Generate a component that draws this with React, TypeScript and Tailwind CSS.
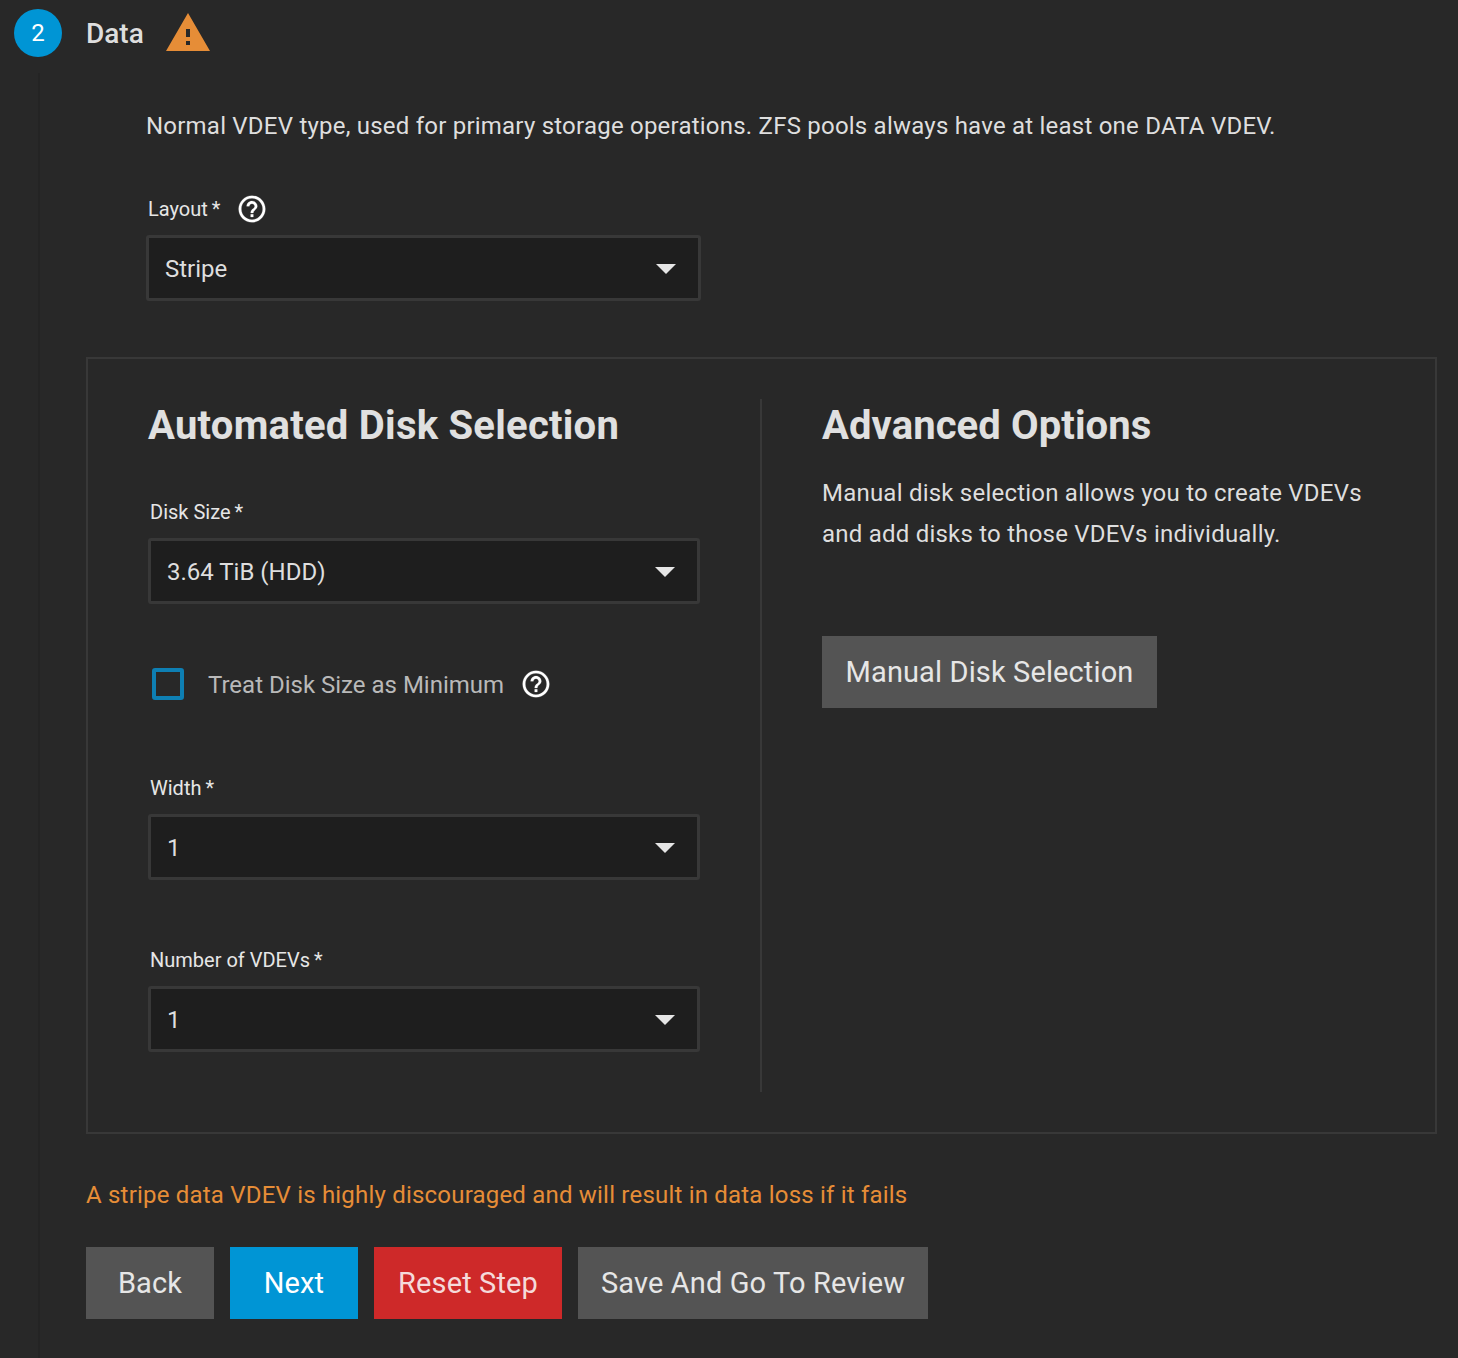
const QUESTION_PATH =
  "M11 18h2v-2h-2v2zm1-16C6.48 2 2 6.48 2 12s4.48 10 10 10 10-4.48 10-10S17.52 2 12 2zm0 18c-4.41 0-8-3.59-8-8s3.59-8 8-8 8 3.59 8 8-3.59 8-8 8zm0-14c-2.21 0-4 1.79-4 4h2c0-1.1.9-2 2-2s2 .9 2 2c0 2-3 1.75-3 5h2c0-2.25 3-2.5 3-5 0-2.21-1.79-4-4-4z";

const HelpIcon = () => (
  <svg viewBox="0 0 24 24" className="h-8 w-8 fill-white stroke-white stroke-[0.15]">
    <path d={QUESTION_PATH} />
  </svg>
);

const WarningIcon = () => (
  <svg viewBox="0 0 24 24" className="h-12 w-12 fill-[#e68d37]">
    <path d="M1 21h22L12 2 1 21zm12-3h-2v-2h2v2zm0-4h-2v-4h2v4z" />
  </svg>
);

const SelectField = ({
  label,
  value,
  help,
  wide,
}: {
  label: string;
  value: string;
  help?: boolean;
  wide?: boolean;
}) => (
  <div className={wide ? "w-[555px]" : "w-[552px]"}>
    <div className="flex h-8 items-center pl-[2px] text-[20px] leading-8 text-[#e6e6e6]">
      <span>{label}</span>
      <span className="ml-1">*</span>
      {help && (
        <span className="ml-[16px]">
          <HelpIcon />
        </span>
      )}
    </div>
    <div className="mt-[10px] flex h-[66px] items-center justify-between rounded-[3px] border-[3px] border-[#383838] bg-[#1e1e1e] pl-[16px] pr-[22px] pt-[2px] text-[24px] text-[#dedede]">
      <span>{value}</span>
      <span className="h-0 w-0 border-x-[10px] border-t-[10px] border-x-transparent border-t-[#e6e6e6]" />
    </div>
  </div>
);

const ActionButton = ({ children, className }: { children: string; className: string }) => (
  <button className={`flex h-[72px] items-center justify-center pt-[2px] text-[29px] tracking-[0.12px] ${className}`}>
    {children}
  </button>
);

export default function App() {
  return (
    <div className="h-[1358px] w-[1458px] overflow-hidden bg-[#282828] font-['Roboto',sans-serif] text-[#dedede]">
      <div className="mb-[7px] flex h-[66px] items-center pl-[14px]">
        <div className="flex h-12 w-12 items-center justify-center rounded-full bg-[#0095d5] text-[24px] text-white">2</div>
        <span className="ml-[24px] pt-[1px] text-[28px] font-medium text-[#dedede]">Data</span>
        <span className="ml-[20px]">
          <WarningIcon />
        </span>
      </div>

      <div className="ml-[38px] h-[1285px] border-l-2 border-[#242424] pl-[46px]">
        <div className="pl-[60px] pt-[35px] text-[24px] leading-[36px] tracking-[0.22px] text-[#dedede]">
          Normal VDEV type, used for primary storage operations. ZFS pools always have at least one DATA VDEV.
        </div>

        <div className="ml-[60px] mt-[49px]">
          <SelectField label="Layout" value="Stripe" help wide />
        </div>

        <div className="mt-[56px] flex h-[777px] w-[1351px] border-2 border-[#383838] py-[40px]">
          <div className="w-[674px] border-r-2 border-[#383838] pl-[60px]">
            <h3 className="text-[40px] font-bold leading-[54px] tracking-[0.25px] text-[#e0e0e0]">Automated Disk Selection</h3>
            <div className="mt-[43px]">
              <SelectField label="Disk Size" value="3.64 TiB (HDD)" />
            </div>
            <div className="ml-[4px] mt-[47px] flex h-[66px] items-center">
              <span className="h-8 w-8 rounded-[3px] border-4 border-[#0e7fb3]" />
              <span className="ml-[24px] pt-[1px] text-[24px] text-[#b9b9b9]">Treat Disk Size as Minimum</span>
              <span className="ml-[16px]">
                <HelpIcon />
              </span>
            </div>
            <div className="mt-[55px]">
              <SelectField label="Width" value="1" />
            </div>
            <div className="mt-[64px]">
              <SelectField label="Number of VDEVs" value="1" />
            </div>
          </div>
          <div className="pl-[60px]">
            <h3 className="text-[40px] font-bold leading-[54px] tracking-[0.1px] text-[#e0e0e0]">Advanced Options</h3>
            <p className="mt-[20px] w-[560px] text-[24px] leading-[41px] tracking-[0.22px] text-[#dedede]">
              Manual disk selection allows you to create VDEVs and add disks to those VDEVs individually.
            </p>
            <ActionButton className="mt-[81px] w-[335px] bg-[#545454] text-[#e6e6e6]">Manual Disk Selection</ActionButton>
          </div>
        </div>

        <div className="mt-[43px] text-[24px] leading-[36px] tracking-[0.2px] text-[#e68d37]">
          A stripe data VDEV is highly discouraged and will result in data loss if it fails
        </div>

        <div className="mt-[34px] flex gap-4">
          <ActionButton className="w-[128px] bg-[#545454] text-[#e6e6e6]">Back</ActionButton>
          <ActionButton className="w-[128px] bg-[#0095d5] text-white">Next</ActionButton>
          <ActionButton className="w-[188px] bg-[#ce2929] text-[#f5dada]">Reset Step</ActionButton>
          <ActionButton className="w-[350px] bg-[#545454] text-[#e6e6e6]">Save And Go To Review</ActionButton>
        </div>
      </div>
    </div>
  );
}
